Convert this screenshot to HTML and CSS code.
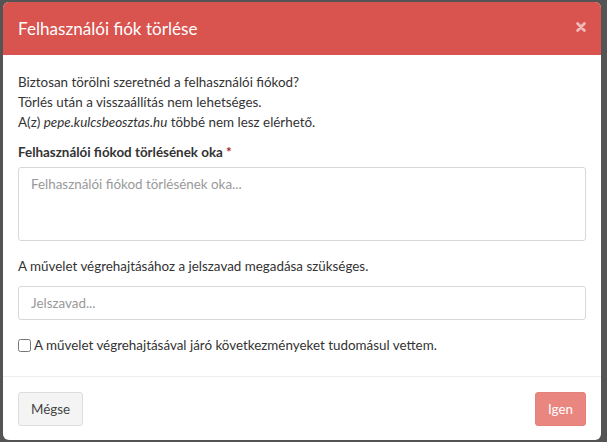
FILE: index.html
```html
<!DOCTYPE html>
<html lang="hu">
<head>
<meta charset="utf-8">
<title>Felhasználói fiók törlése</title>
<link rel="stylesheet" href="styles.css">
</head>
<body>
<div class="modal">
  <div class="modal-header">
    <h4 class="modal-title">Felhasználói fiók törlése</h4>
    <button class="close" type="button" aria-label="Bezárás">
      <svg width="10" height="10" viewBox="0 0 10 10"><path d="M1.6 1.6 L8.4 8.4 M8.4 1.6 L1.6 8.4" stroke="currentColor" stroke-width="2.8" stroke-linecap="round"/></svg>
    </button>
  </div>
  <div class="modal-body">
    <p class="intro">Biztosan törölni szeretnéd a felhasználói fiókod?<br>Törlés után a visszaállítás nem lehetséges.<br>A(z) <i>pepe.kulcsbeosztas.hu</i> többé nem lesz elérhető.</p>
    <div class="form-group">
      <label class="label">Felhasználói fiókod törlésének oka <span class="req">*</span></label>
      <textarea class="textarea" placeholder="Felhasználói fiókod törlésének oka..."></textarea>
    </div>
    <p class="hint">A művelet végrehajtásához a jelszavad megadása szükséges.</p>
    <input class="input" type="password" placeholder="Jelszavad...">
    <label class="check"><input type="checkbox" class="checkbox">A művelet végrehajtásával járó következményeket tudomásul vettem.</label>
  </div>
  <div class="modal-footer">
    <button class="btn btn-default" type="button">Mégse</button>
    <button class="btn btn-danger" type="button" disabled>Igen</button>
  </div>
</div>
</body>
</html>
```
FILE: styles.css
```css
html, body {
  margin: 0;
  height: 100%;
}
body {
  background: #545454;
  padding: 2px 6px 0 3px;
  box-sizing: border-box;
  font-family: Lato, "Liberation Sans", sans-serif;
  font-size: 13.4px;
  line-height: 20px;
  color: #333;
  overflow: hidden;
}
.modal {
  background: #fff;
  border-radius: 6px;
  height: 438px;
  overflow: hidden;
  display: flex;
  flex-direction: column;
}
.modal-header {
  background: #d9534f;
  color: #fff;
  height: 53px;
  padding: 0 15px 0 15px;
  display: flex;
  align-items: center;
  justify-content: space-between;
  box-sizing: border-box;
}
.modal-title {
  margin: 0;
  font-size: 17.1px;
  font-weight: 400;
  line-height: 25px;
  padding-bottom: 1px;
}
.close {
  background: none;
  border: 0;
  padding: 0;
  margin: 0 0 4px 0;
  color: #f1bbb9;
  display: flex;
}
.modal-body {
  padding: 17px 15px 0 15px;
  flex: 1;
}
.intro {
  margin: 0 0 10px;
}
.label {
  display: block;
  font-weight: 700;
  margin-bottom: 5px;
}
.req {
  color: #a52a2a;
}
.form-group {
  margin-bottom: 15px;
}
.textarea {
  display: block;
  width: 100%;
  box-sizing: border-box;
  height: 74px;
  border: 1px solid #d8d8d8;
  border-radius: 3px;
  padding: 6px 12px;
  font: inherit;
  color: #333;
  resize: none;
  margin: 0;
}
.hint {
  margin: 0 0 10px;
}
.input {
  display: block;
  width: 100%;
  box-sizing: border-box;
  height: 34px;
  border: 1px solid #d8d8d8;
  border-radius: 3px;
  padding: 6px 12px;
  font: inherit;
  margin: 0 0 15px;
}
.textarea::placeholder, .input::placeholder {
  color: #999;
}
.check {
  display: flex;
  align-items: center;
}
.checkbox {
  width: 13px;
  height: 13px;
  margin: 0 3px 0 0;
}
.modal-footer {
  border-top: 1px solid #eee;
  padding: 15px 15px 14px;
  display: flex;
  justify-content: space-between;
}
.btn {
  font: inherit;
  height: 34px;
  padding: 6px 12px;
  border-radius: 3px;
  line-height: 20px;
}
.btn-default {
  background: #f4f4f4;
  border: 1px solid #ddd;
  color: #444;
}
.btn-danger {
  background: #e8867f;
  border: 1px solid #e68079;
  color: #fff;
}
```
